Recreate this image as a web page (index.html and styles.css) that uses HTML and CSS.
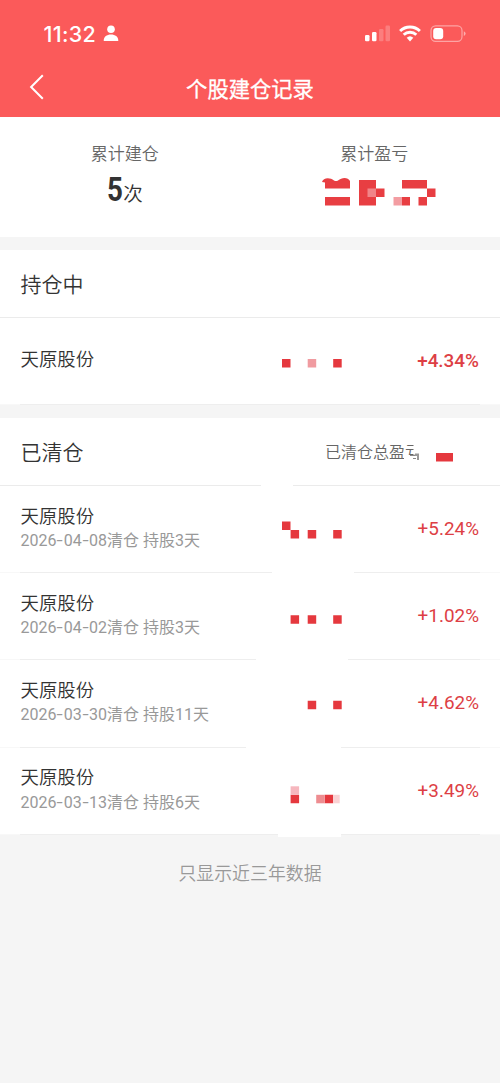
FILE: index.html
```
<!DOCTYPE html>
<html lang="zh-CN">
<head>
<meta charset="utf-8">
<meta name="viewport" content="width=device-width, initial-scale=1">
<title>个股建仓记录</title>
<link rel="stylesheet" href="styles.css">
</head>
<body>
<header class="header">
  <div class="status">
    <span class="time">11:32</span>
    <svg class="person" width="16" height="17" viewBox="0 0 16 17" fill="#fff"><circle cx="8" cy="4.3" r="3.8"/><path d="M.7 15.5C.7 11.8 3.8 9.5 8 9.500s7.300 2.300 7.300 6q0 .5-.7.5H1.400q-.7 0-.7-.5z"/></svg>
    <svg class="signals" width="104" height="20" viewBox="0 0 104 20" fill="#fff">
      <rect x="1" y="11" width="4.500" height="6.300" rx="1.200"/><rect x="8" y="8" width="4.500" height="9.300" rx="1.200"/>
      <g opacity=".22"><rect x="15" y="5" width="4.500" height="12.300" rx="1.200"/><rect x="21.500" y="1.500" width="4.500" height="15.800" rx="1.200"/></g>
      <g fill="none" stroke="#fff" stroke-width="2.900"><path d="M36.100 7a14.200 14.200 0 0 1 19.800 0"/><path d="M39.700 10.800a9 9 0 0 1 12.600 0"/></g>
      <path d="M42.700 13.700a4.900 4.900 0 0 1 6.600 0l-3.300 3.800z"/>
      <rect x="67" y="1.800" width="31" height="15.600" rx="4.600" fill="none" stroke="#fff" stroke-opacity=".45" stroke-width="1.200"/>
      <rect x="69.200" y="4" width="10" height="11.200" rx="3"/><path opacity=".5" d="M99.800 7.300q1.800.7 1.800 2.300t-1.800 2.300z"/>
    </svg>
  </div>
  <nav class="navbar">
    <svg class="back" width="16" height="26" viewBox="0 0 16 26" fill="none" stroke="#fff" stroke-width="2"><path d="M13.800 1.200 2.100 13l11.700 11.800"/></svg>
    <h1 class="title">个股建仓记录</h1>
  </nav>
</header>

<section class="summary">
  <div class="stat">
    <div class="stat-label">累计建仓</div>
    <div class="stat-value"><b class="count">5</b><span>次</span></div>
  </div>
  <div class="stat">
    <div class="stat-label">累计盈亏</div>
    <svg class="stat-mask" width="116" height="32" viewBox="0 0 116 32" fill="#e83e42">
      <path d="M2 6C3 1.500 10 1 14 4.500q2 1.200 4 0C22 1 28 1 30 5v7.500H5V6.500z"/><path d="M5 21h25v8.500H5zM39 4h17v8.500h8.500V21H56v8.500H39zM82 4h25v8.500h8.500V21H107v8.500h-8.500V21h8.500v-8.500H82zM82 21h8v8.500h-8z"/>
      <path fill="#f18488" d="M47.500 12.500H56V21h-8.500z"/><path fill="#f39da2" d="M73.500 21H82v8.500h-8.500z"/>
    </svg>
  </div>
</section>

<section class="panel">
  <div class="panel-head"><h2>持仓中</h2></div>
  <div class="row holding">
    <div class="stock"><div class="name">天原股份</div></div>
    <svg class="mask" width="80" height="86" fill="#e5383e"><path d="M4 41h8.500v8.500H4zM55.200 41h8.500v8.500h-8.500z"/><path fill="#f09ba0" d="M29.700 41h8.500v8.500h-8.500z"/></svg>
    <div class="rate">+4.34%</div>
  </div>
</section>

<section class="panel">
  <div class="panel-head split">
    <h2>已清仓</h2>
    <div class="total"><span>已清仓总盈亏</span>
      <svg class="smudge" width="18" height="20" viewBox="0 0 18 20"><path fill="#fff" d="M9.500 0H18v20H0v-7h9.500z"/><path d="M6 13.500h5v-1M9 16.500h3" fill="none" stroke="#888" stroke-width="1.200"/><path fill="#999" d="M11 11.500h4V18h-2v-4h-2z"/></svg>
    </div>
    <svg class="total-mask" width="18" height="9"><path fill="#e5383e" d="M0 0h17v8.500H0z"/></svg>
  </div>
  <div class="row cut-a">
    <div class="stock"><div class="name">天原股份</div><div class="meta">2026<i>-</i>04<i>-</i>08清仓 持股3天</div></div>
    <svg class="mask" width="80" height="86" fill="#e5383e"><path d="M4 35.500h8.500V44H4zM12.600 44h8.500v8.500h-8.500zM29.700 44h8.500v8.500h-8.500zM55.200 44h8.500v8.500h-8.500z"/></svg>
    <div class="rate">+5.24%</div>
  </div>
  <div class="row cut-b">
    <div class="stock"><div class="name">天原股份</div><div class="meta">2026<i>-</i>04<i>-</i>02清仓 持股3天</div></div>
    <svg class="mask" width="80" height="86" fill="#e5383e"><path d="M12.600 42.300h8.500v8.500h-8.500zM29.700 42.300h8.500v8.500h-8.500zM55.200 42.300h8.500v8.500h-8.500z"/></svg>
    <div class="rate">+1.02%</div>
  </div>
  <div class="row cut-c">
    <div class="stock"><div class="name">天原股份</div><div class="meta">2026<i>-</i>03<i>-</i>30清仓 持股11天</div></div>
    <svg class="mask" width="80" height="86" fill="#e5383e"><path d="M29.700 40.700h8.500v8.500h-8.500zM55.200 40.700h8.500v8.500h-8.500z"/></svg>
    <div class="rate">+4.62%</div>
  </div>
  <div class="row cut-d">
    <div class="stock"><div class="name">天原股份</div><div class="meta">2026<i>-</i>03<i>-</i>13清仓 持股6天</div></div>
    <svg class="mask" width="80" height="86" fill="#e5383e"><path d="M12.600 46.800h8.500v8.500h-8.500zM46.700 46.800h8.500v8.500h-8.500z"/><path fill="#f6b7be" d="M12.600 38.300h8.500v8.500h-8.500z"/><path fill="#ee8d91" d="M38.200 46.800h8.500v8.500h-8.500z"/><path fill="#fad2d4" d="M55.200 46.800h6.500v8.500h-6.500z"/><path fill="#fff" d="M0 84h63v5H0z"/></svg>
    <div class="rate">+3.49%</div>
  </div>
</section>
<footer class="note">只显示近三年数据</footer>
</body>
</html>
```
FILE: styles.css
```
* { box-sizing: border-box; }
body {
  margin: 0;
  width: 500px;
  min-height: 1083px;
  background: #f5f5f5;
  color: #333;
  font-family: Roboto, "Noto Sans CJK SC", sans-serif;
  font-weight: 350;
}
svg { display: block; flex: none; }
h1, h2 { margin: 0; }

.header { height: 117px; background: #fb5a5a; color: #fff; }
.status { display: flex; height: 62px; padding: 22px 32px 0 43.500px; }
.time {
  width: 59.500px;
  font: 500 21.500px/24px Inter, sans-serif;
  letter-spacing: .3px;
}
.person { margin-top: 3px; }
.signals { margin: 2px 0 0 auto; }
.navbar {
  display: grid;
  grid-template-columns: 40px 1fr 40px;
  height: 54px;
  padding: 0 29px;
  align-items: center;
}
.back { margin-top: -5px; }
.title {
  padding-top: 2px;
  font-size: 21.300px;
  font-weight: 400;
  -webkit-text-stroke: .3px #fff;
  line-height: 30px;
  text-align: center;
  white-space: nowrap;
}

.summary {
  display: grid;
  grid-template-columns: 1fr 1fr;
  height: 120px;
  padding: 24px 1px 0 0;
  background: #fff;
}
.stat { display: flex; flex-direction: column; align-items: center; }
.stat-label { padding-top: 1px; font-size: 17px; line-height: 24px; color: #666; }
.stat-value { display: flex; align-items: baseline; font-size: 19.500px; line-height: 48px; }
.count { width: 16.500px; font-size: 33px; transform: scaleX(.84); transform-origin: left; }
.stat-mask { margin: 10px 0 0 8px; }

.panel { margin-top: 13px; background: #fff; }
.panel-head {
  display: flex;
  height: 68px;
  padding: 2px 20px 0 20.500px;
  align-items: center;
  border-bottom: 1px solid #ebebeb;
}
.panel-head h2 { font-size: 21px; font-weight: 350; line-height: 30px; }
.split {
  border: 0;
  background: linear-gradient(90deg, #ebebeb 261px, #fff 261px 293px, #ebebeb 293px) bottom / 100% 1px no-repeat;
}
.total { position: relative; margin-left: auto; font-size: 16px; line-height: 24px; color: #666; }
.smudge { position: absolute; right: -1px; top: 1px; }
.total-mask { margin: 9px 26px 0 15px; }

.row {
  display: grid;
  grid-template-columns: 258px 80px 1fr;
  height: 87.200px;
  padding: 0 20px;
  background: linear-gradient(90deg, #f8f8f8 20px, #eee 20px var(--from), #fff var(--from) var(--to), #eee var(--to) 480px, #f8f8f8 480px) bottom / 100% 1px no-repeat;
}
.holding { --from: 250px; --to: 250px; height: 87px; }
.cut-a { --from: 272px; --to: 354px; }
.cut-b { --from: 256px; --to: 348px; }
.cut-c { --from: 246px; --to: 341px; }
.cut-d { --from: 278px; --to: 341px; }
.mask { overflow: visible; }
.stock { padding: 16.500px 0 0 .5px; }
.holding .stock { padding-top: 28px; }
.name { font-size: 18.400px; line-height: 27px; }
.meta { margin-top: -.5px; font-size: 16px; font-weight: 400; line-height: 24px; color: #999; white-space: pre; }
.meta i { display: inline-block; width: 7.300px; text-align: center; font-style: normal; transform: scaleX(1.4); }
.rate { color: #dd3f45; font-size: 18.900px; line-height: 86px; font-weight: 400; text-align: right; padding-right: 1px; }
.holding .rate { font-weight: 500; line-height: 85px; }
.note { padding-top: 26px; color: #999; font-size: 17.900px; line-height: 26px; text-align: center; }
```
